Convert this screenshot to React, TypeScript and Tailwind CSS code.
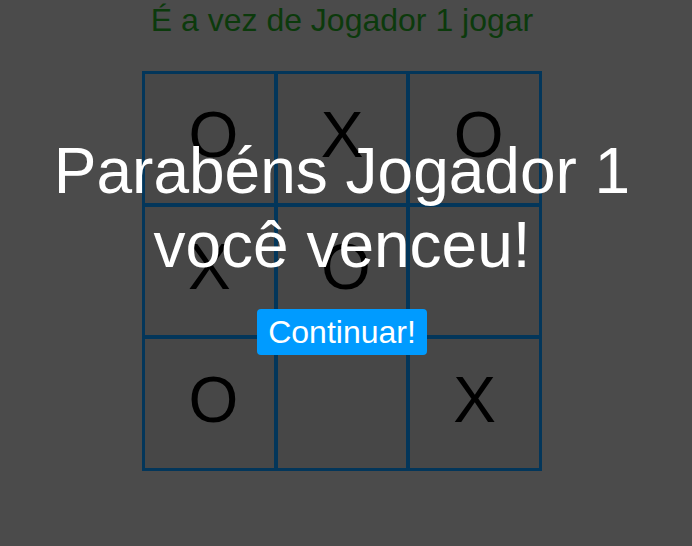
const board = ['O', 'X', 'O', 'X', 'O', '', 'O', '', 'X']

export default function App() {
  return (
    <div className="relative h-[546px] w-full overflow-hidden bg-[#4b4b4b] font-['Liberation_Sans',Arial,sans-serif]">
      <div className="flex w-[684px] flex-col items-center">
        <h1 className="mt-[2px] text-[32px] leading-[37px] text-[#0c3a0c]">É a vez de Jogador 1 jogar</h1>

        {/* Tabuleiro */}
        <div className="mt-[32px] grid h-[400px] w-[400px] grid-cols-3 border border-[#03365a]">
          {board.map((v, i) => (
            <div
              key={i}
              className={`flex items-center justify-center border-2 border-[#03365a] bg-[#474747] pb-[7px] text-[64px] leading-none text-black ${v === 'O' ? 'pl-[8px]' : ''}`}
            >
              {v}
            </div>
          ))}
        </div>
      </div>

      {/* Overlay de vitória */}
      <div className="absolute inset-0 flex w-[684px] flex-col items-center pt-[134px]">
        <p className="text-center text-[64px] leading-[74px] text-white">
          Parabéns Jogador 1
          <br />
          você venceu!
        </p>
        <button className="mt-[27px] rounded-[4px] bg-[#009bff] px-[11px] py-[4px] text-[32px] leading-[38px] text-white">
          Continuar!
        </button>
      </div>
    </div>
  )
}
